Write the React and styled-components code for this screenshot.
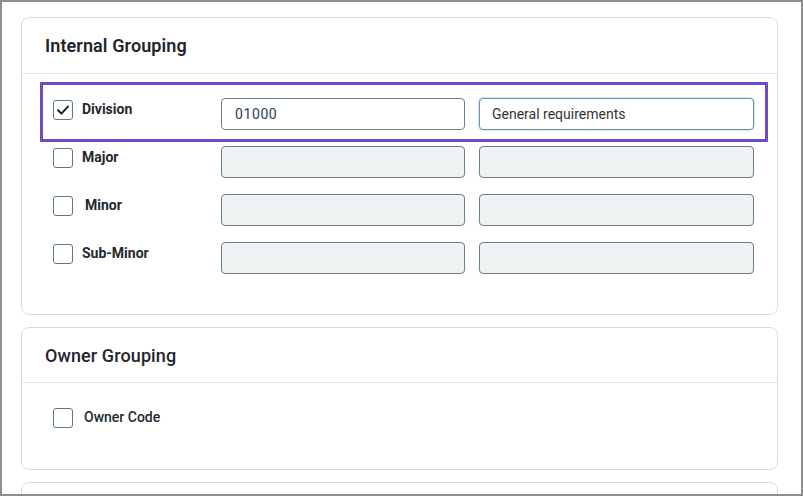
import React from "react";
import styled, { createGlobalStyle } from "styled-components";

const Global = createGlobalStyle`
  html, body { margin: 0; padding: 0; background: #ffffff; }
  * { box-sizing: border-box; }
`;

const Frame = styled.div`
  width: 803px;
  height: 496px;
  border: 2px solid #8e8e8e;
  overflow: hidden;
  background: #ffffff;
  padding: 15px 23px 0 19px;
  display: flex;
  flex-direction: column;
  gap: 12px;
  font-family: Roboto, "Noto Sans", sans-serif;
`;

const Card = styled.section`
  border: 1px solid #d5dce1;
  border-radius: 8px;
  background: #fff;
  flex-shrink: 0;
  min-height: ${(p) => p.$minHeight || "auto"};
`;

const CardHeader = styled.div`
  height: ${(p) => p.$height || "56px"};
  padding-left: 23px;
  display: flex;
  align-items: center;
  border-bottom: 1px solid #e4e9eb;
`;

const Title = styled.h2`
  margin: 0;
  font-size: 18px;
  font-weight: ${(p) => p.$weight || 500};
  color: #1e252b;
  letter-spacing: 0.1px;
`;

const GroupBody = styled.div`
  padding: 8px 9px 28px 18px;
  display: flex;
  flex-direction: column;
`;

const Row = styled.div`
  display: grid;
  grid-template-columns: 154px 244px 275px;
  column-gap: 14px;
  padding: ${(p) => (p.$highlight ? "13px 11px 9px 10px" : "4px 11px 12px 10px")};
  border: 3px solid ${(p) => (p.$highlight ? "#6e4bbf" : "transparent")};
  border-width: ${(p) => (p.$highlight ? "3px" : "0 3px")};
`;

const LabelCell = styled.label`
  display: flex;
  align-items: center;
  align-self: flex-start;
  padding-top: 2px;
  gap: ${(p) => p.$gap || "9px"};
`;

const Box = styled.span`
  width: 20px;
  height: 20px;
  flex-shrink: 0;
  border: 1.5px solid #5f7a8b;
  border-radius: 3px;
  background: #fff;
  display: flex;
  align-items: center;
  justify-content: center;
`;

const LabelText = styled.span`
  font-size: 14px;
  line-height: 20px;
  font-weight: ${(p) => p.$weight || 700};
  color: #24292d;
  padding-left: ${(p) => p.$indent || "0"};
  margin-top: ${(p) => p.$lift || "-3px"};
`;

const Field = styled.div`
  height: 32px;
  border: 1px solid ${(p) => (p.$focused ? "#6b8fb3" : "#677f8d")};
  border-radius: 4px;
  background: ${(p) => (p.$disabled ? "#eff2f3" : "#fff")};
  box-shadow: ${(p) => (p.$focused ? "0 0 0 1px #d6e5f3" : "none")};
  display: flex;
  align-items: center;
  padding-left: ${(p) => p.$pad || "13px"};
  font-size: 14px;
  color: ${(p) => p.$color || "#333"};
  letter-spacing: ${(p) => p.$spacing || "0"};
`;

const OwnerBody = styled.div`
  padding: 23px 0 41px 31px;
`;

const Check = () => (
  <svg width="14" height="14" viewBox="0 0 14 14">
    <path d="M2 7.2 L5.4 10.6 L12 3.6" fill="none" stroke="#1b1f22" strokeWidth="2" strokeLinecap="round" strokeLinejoin="round" />
  </svg>
);

const rows = [
  { label: "Division", checked: true, code: "01000", desc: "General requirements", highlight: true },
  { label: "Major" },
  { label: "Minor", indent: "3px" },
  { label: "Sub-Minor" },
];

export default function App() {
  return (
    <>
      <Global />
      <Frame>
        <Card>
          <CardHeader>
            <Title $weight={600}>Internal Grouping</Title>
          </CardHeader>
          <GroupBody>
            {rows.map((r) => (
              <Row key={r.label} $highlight={r.highlight}>
                <LabelCell>
                  <Box>{r.checked && <Check />}</Box>
                  <LabelText $indent={r.indent}>{r.label}</LabelText>
                </LabelCell>
                <Field $disabled={!r.checked} $color="#2a3d52" $spacing="0.6px">{r.code}</Field>
                <Field $disabled={!r.checked} $focused={r.checked} $pad="12px">{r.desc}</Field>
              </Row>
            ))}
          </GroupBody>
        </Card>
        <Card>
          <CardHeader $height="55px">
            <Title>Owner Grouping</Title>
          </CardHeader>
          <OwnerBody>
            <LabelCell $gap="11px">
              <Box />
              <LabelText $weight={500} $lift="-2px">Owner Code</LabelText>
            </LabelCell>
          </OwnerBody>
        </Card>
        <Card $minHeight="60px" />
      </Frame>
    </>
  );
}
